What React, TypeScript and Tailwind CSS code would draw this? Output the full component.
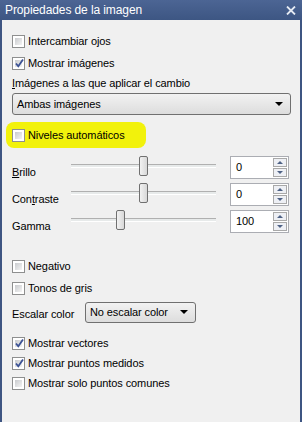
import { useState } from "react";

const font = { fontFamily: '"Liberation Sans", Arial, sans-serif' };

function Check({ checked }: { checked?: boolean }) {
  return (
    <span className="w-[13px] h-[13px] border border-[#8e8f8f] bg-white p-[2px] flex shrink-0 relative">
      <span className="flex-1 bg-gradient-to-br from-[#c9cbce] to-[#f4f4f4]" />
      {checked && (
        <svg className="absolute left-[1px] top-[0px]" width="11" height="11" viewBox="0 0 11 11">
          <path d="M2 5.5 L4.3 8.3 L9 1.5" fill="none" stroke="#3c5396" strokeWidth="1.8" />
        </svg>
      )}
    </span>
  );
}

function CheckRow({ label, checked, h = "h-[22px]" }: { label: string; checked?: boolean; h?: string }) {
  return (
    <div className={`${h} flex items-center gap-[3px]`}>
      <Check checked={checked} />
      <span>{label}</span>
    </div>
  );
}

function Arrow() {
  return <span className="w-0 h-0 border-l-[4px] border-r-[4px] border-t-[4px] border-l-transparent border-r-transparent border-t-black" />;
}

function Slider({ pos }: { pos: number }) {
  return (
    <div className="w-[145px] h-[27px] relative shrink-0">
      <div className="absolute left-0 right-0 top-[10px] h-[4px] border-t border-[#b0b0b0] border-b border-b-white bg-[#e7eaea]" />
      <div
        className="absolute top-[2px] w-[9px] h-[20px] rounded-[2px] border border-[#707070] bg-gradient-to-r from-[#f2f2f2] to-[#d8d8d8]"
        style={{ left: pos }}
      />
    </div>
  );
}

function Spin({ value }: { value: string }) {
  return (
    <div className="w-[59px] h-[23px] border border-[#abadb3] bg-white flex shrink-0">
      <span className="flex-1 pl-[5px] leading-[20px]">{value}</span>
      <div className="w-[16px] flex flex-col gap-[1px] p-[1px]">
        <span className="flex-1 border border-[#a9a9a9] bg-[#eef0f5] flex items-center justify-center">
          <span className="w-0 h-0 border-l-[3px] border-r-[3px] border-b-[3px] border-l-transparent border-r-transparent border-b-[#4d6185]" />
        </span>
        <span className="flex-1 border border-[#a9a9a9] bg-[#eef0f5] flex items-center justify-center">
          <span className="w-0 h-0 border-l-[3px] border-r-[3px] border-t-[3px] border-l-transparent border-r-transparent border-t-[#4d6185]" />
        </span>
      </div>
    </div>
  );
}

function SliderRow({ label, pos, value }: { label: React.ReactNode; pos: number; value: string }) {
  return (
    <div className="h-[27px] flex items-center">
      <span className="w-[59px] shrink-0 mt-[10px]">{label}</span>
      <Slider pos={pos} />
      <div className="w-[14px]" />
      <Spin value={value} />
    </div>
  );
}

export default function App() {
  const [sel] = useState("Ambas imágenes");
  return (
    <div className="w-[302px] h-[422px] flex flex-col text-[11px] tracking-[-0.1px] text-black overflow-hidden whitespace-nowrap" style={font}>
      <div className="h-[20px] shrink-0 flex items-center justify-between pl-[5px] pr-[6px] bg-gradient-to-b from-[#4c6594] to-[#3d5683]">
        <span className="text-white text-[12px] tracking-[-0.1px] leading-none">Propiedades de la imagen</span>
        <svg width="10" height="9" viewBox="0 0 10 9">
          <path d="M1 0.5 L9 8.5 M9 0.5 L1 8.5" stroke="#e6ebf3" strokeWidth="1.8" />
        </svg>
      </div>
      <div className="flex-1 bg-[#f0f0f0] border-l-[2px] border-r-[2px] border-[#3e5582] pl-[10px] pr-[9px] pt-[10px] flex flex-col">
        <CheckRow label="Intercambiar ojos" />
        <CheckRow label="Mostrar imágenes" checked />
        <div className="h-[18px] flex items-center">
          <span><span className="underline">I</span>mágenes a las que aplicar el cambio</span>
        </div>
        <div className="mt-[1px] h-[22px] rounded-[3px] border border-[#707070] bg-gradient-to-b from-[#f2f2f2] to-[#dddddd] flex items-center justify-between pl-[4px] pr-[7px]">
          <span>{sel}</span>
          <Arrow />
        </div>
        <div className="mt-[7px] h-[26px] -ml-[6px] pl-[6px] w-[140px] bg-[#f2f20c] rounded-[8px] flex items-center gap-[3px]">
          <Check />
          <span>Niveles automáticos</span>
        </div>
        <div className="mt-[6px]">
          <SliderRow label={<><span className="underline">B</span>rillo</>} pos={68} value="0" />
          <SliderRow label={<>Con<span className="underline">t</span>raste</>} pos={68} value="0" />
          <SliderRow label="Gamma" pos={45} value="100" />
        </div>
        <div className="mt-[20px]">
          <CheckRow label="Negativo" />
          <CheckRow label="Tonos de gris" />
        </div>
        <div className="mt-[2px] h-[22px] flex items-center">
          <span className="w-[73px] shrink-0 mt-[5px]">Escalar color</span>
          <div className="w-[111px] h-[21px] rounded-[3px] border border-[#707070] bg-gradient-to-b from-[#f2f2f2] to-[#dddddd] flex items-center justify-between pl-[4px] pr-[7px]">
            <span>No escalar color</span>
            <Arrow />
          </div>
        </div>
        <div className="mt-[10px]">
          <CheckRow label="Mostrar vectores" checked h="h-[20px]" />
          <CheckRow label="Mostrar puntos medidos" checked h="h-[20px]" />
          <CheckRow label="Mostrar solo puntos comunes" h="h-[20px]" />
        </div>
      </div>
    </div>
  );
}
